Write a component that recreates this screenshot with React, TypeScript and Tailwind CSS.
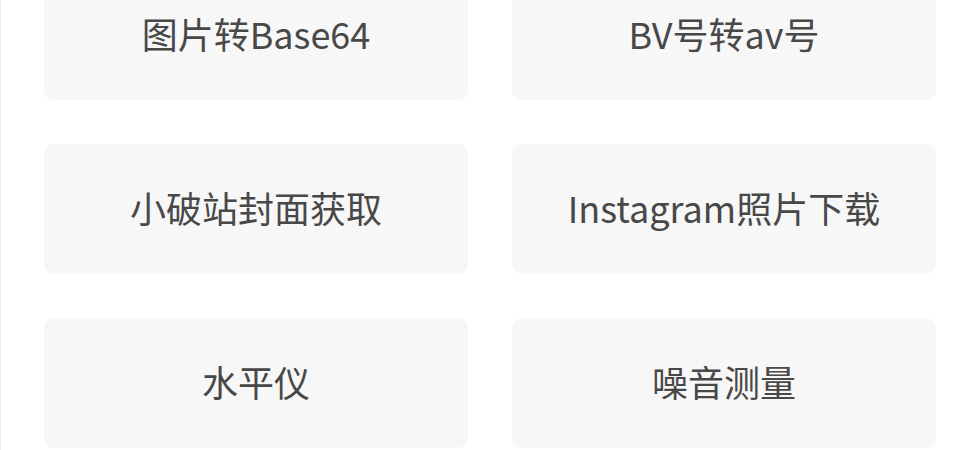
const tools = [
  "图片转Base64",
  "BV号转av号",
  "小破站封面获取",
  "Instagram照片下载",
  "水平仪",
  "噪音测量",
];

export default function App() {
  return (
    <div className="h-[450px] overflow-hidden bg-white border-l border-[#efefef]">
      <div className="-mt-[30px] grid grid-cols-2 gap-[44px] pl-[43px] pr-[44px]">
        {tools.map((name) => (
          <button
            key={name}
            className="flex h-[130px] items-center justify-center rounded-[10px] bg-[#f7f7f7] pb-[4px] text-[36px] leading-none text-[#484848]"
            style={{ fontFamily: '"Noto Sans CJK SC", "Noto Sans", sans-serif' }}
          >
            {name}
          </button>
        ))}
      </div>
    </div>
  );
}
